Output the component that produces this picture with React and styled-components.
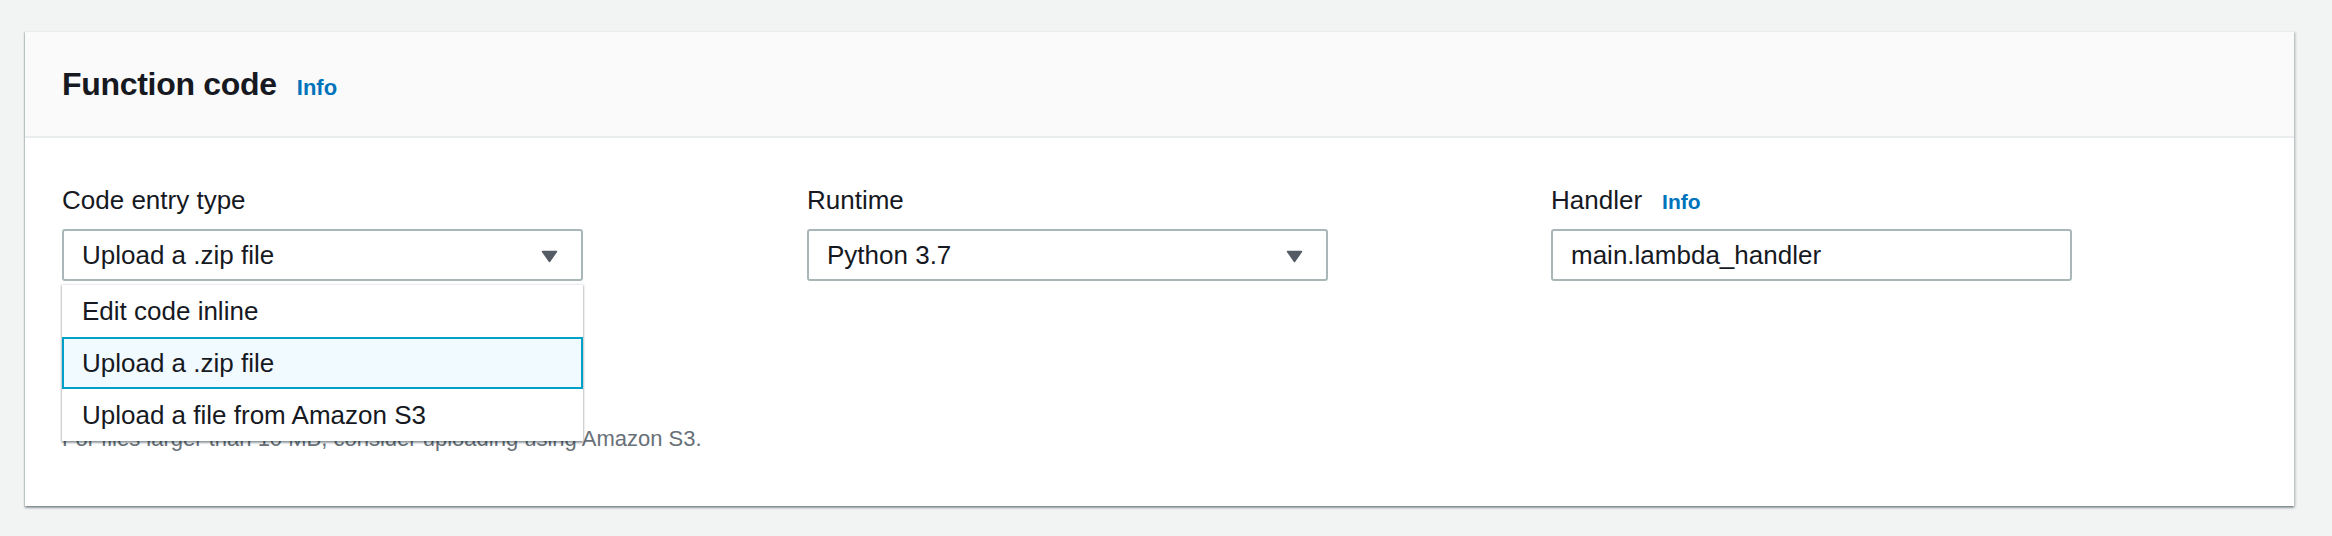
import React from "react";
import styled, { createGlobalStyle } from "styled-components";

const GlobalStyle = createGlobalStyle`
  html, body {
    margin: 0;
    padding: 0;
    background: #f2f3f3;
  }
  body {
    font-family: "Liberation Sans", Arial, sans-serif;
    color: #16191f;
  }
`;

const Page = styled.div`
  padding: 31px 38px 20px 25px;
`;

const Card = styled.section`
  background: #ffffff;
  border-top: 1px solid #eaeded;
  box-shadow: 0 2px 2px 0 rgba(0, 28, 36, 0.35),
    2px 1px 2px 0 rgba(0, 28, 36, 0.12),
    -1px 1px 1px 0 rgba(0, 28, 36, 0.12);
`;

const Header = styled.header`
  display: flex;
  align-items: baseline;
  gap: 20px;
  padding: 32px 37px 32px;
  background: #fafafa;
  border-bottom: 2px solid #eaeded;
`;

const Title = styled.h2`
  margin: 0;
  font-size: 32px;
  line-height: 40px;
  font-weight: 700;
  letter-spacing: -0.3px;
  color: #16191f;
`;

const InfoLink = styled.a`
  font-size: ${(p) => (p.$small ? "21px" : "22px")};
  line-height: 24px;
  font-weight: 700;
  color: #0073bb;
  text-decoration: none;
  cursor: pointer;
`;

const Body = styled.div`
  display: grid;
  grid-template-columns: 745px 744px 1fr;
  padding: 47px 37px 53px;
`;

const Field = styled.div`
  display: flex;
  flex-direction: column;
  width: 521px;
`;

const Label = styled.label`
  display: flex;
  align-items: baseline;
  gap: 20px;
  height: 30px;
  font-size: 26px;
  line-height: 30px;
  margin-bottom: 14px;
`;

const SelectWrap = styled.div`
  position: relative;
`;

const SelectBox = styled.div`
  box-sizing: border-box;
  display: flex;
  align-items: center;
  justify-content: space-between;
  height: 52px;
  padding: 0 23px 0 18px;
  border: 2px solid #aab7b8;
  border-radius: 3px;
  background: #fff;
  font-size: 26px;
  line-height: 48px;
  cursor: pointer;
`;

const Caret = styled.svg`
  width: 17px;
  height: 13px;
  margin-top: 3px;
  flex: none;
`;

const TextInput = styled.input`
  box-sizing: border-box;
  width: 100%;
  height: 52px;
  padding: 0 18px;
  border: 2px solid #aab7b8;
  border-radius: 3px;
  background: #fff;
  font-family: "Liberation Sans", Arial, sans-serif;
  font-size: 26px;
  color: #16191f;
  outline: none;
`;

const Menu = styled.ul`
  position: absolute;
  top: calc(100% + 3px);
  left: 0;
  right: 0;
  margin: 0;
  padding: 0;
  list-style: none;
  background: #fff;
  border-top: 1px solid #eaeded;
  box-shadow: 0 2px 2px 0 rgba(0, 28, 36, 0.3),
    1px 1px 2px 0 rgba(0, 28, 36, 0.15),
    -1px 1px 2px 0 rgba(0, 28, 36, 0.15);
  z-index: 10;
`;

const Option = styled.li`
  box-sizing: border-box;
  height: 52px;
  padding: 0 18px;
  font-size: 26px;
  line-height: 48px;
  border: 2px solid ${(p) => (p.$active ? "#00a1c9" : "transparent")};
  background: ${(p) => (p.$active ? "#f1faff" : "#fff")};
  cursor: pointer;
`;

const Hint = styled.p`
  margin: 144px 0 0;
  font-size: 22px;
  line-height: 28px;
  color: #687078;
  white-space: nowrap;
`;

const CaretIcon = () => (
  <Caret viewBox="0 0 17 13">
    <path
      d="M1.5 1.5h14l-7 10z"
      fill="#545b64"
      stroke="#545b64"
      strokeWidth="1.5"
      strokeLinejoin="round"
    />
  </Caret>
);

const entryTypes = ["Edit code inline", "Upload a .zip file", "Upload a file from Amazon S3"];

export default function App() {
  const selected = "Upload a .zip file";
  return (
    <>
      <GlobalStyle />
      <Page>
        <Card>
          <Header>
            <Title>Function code</Title>
            <InfoLink>Info</InfoLink>
          </Header>
          <Body>
            <Field>
              <Label>Code entry type</Label>
              <SelectWrap>
                <SelectBox>
                  <span>{selected}</span>
                  <CaretIcon />
                </SelectBox>
                <Menu>
                  {entryTypes.map((t) => (
                    <Option key={t} $active={t === selected}>
                      {t}
                    </Option>
                  ))}
                </Menu>
              </SelectWrap>
              <Hint>For files larger than 10 MB, consider uploading using Amazon S3.</Hint>
            </Field>
            <Field>
              <Label>Runtime</Label>
              <SelectBox>
                <span>Python 3.7</span>
                <CaretIcon />
              </SelectBox>
            </Field>
            <Field>
              <Label>
                Handler <InfoLink $small>Info</InfoLink>
              </Label>
              <TextInput readOnly value="main.lambda_handler" />
            </Field>
          </Body>
        </Card>
      </Page>
    </>
  );
}
